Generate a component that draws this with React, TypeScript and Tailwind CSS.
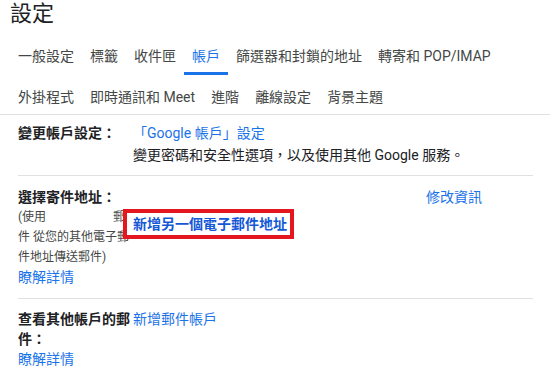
import React from 'react';

const tabsTop = ['一般設定', '標籤', '收件匣', '帳戶', '篩選器和封鎖的地址', '轉寄和 POP/IMAP'];
const tabsBottom = ['外掛程式', '即時通訊和 Meet', '進階', '離線設定', '背景主題'];

const font = { fontFamily: 'Roboto, "Noto Sans CJK TC", "Noto Sans", sans-serif' };

function Tab({ label, active }: { label: string; active?: boolean }) {
  return (
    <div
      className={
        'px-2 pt-[8px] pb-[6px] border-b-[3px] text-[14px] leading-[20px] whitespace-nowrap ' +
        (active ? 'border-[#1a73e8] text-[#1a73e8]' : 'border-transparent text-[#444746]')
      }
    >
      {label}
    </div>
  );
}

export default function App() {
  return (
    <div className="w-[550px] h-[383px] overflow-hidden bg-white text-[#202124]" style={font}>
      {/* header */}
      <div className="h-[38px] pl-[10px] text-[22px] leading-[28px]">設定</div>

      <div className="border-b border-[#e0e0e0]">
        <div className="flex pl-[10px] h-[37px]">
          {tabsTop.map((t) => (
            <Tab key={t} label={t} active={t === '帳戶'} />
          ))}
        </div>
        <div className="flex pl-[10px] h-[39px]">
          {tabsBottom.map((t) => (
            <div key={t} className="px-2 pt-[12px] text-[14px] leading-[20px] whitespace-nowrap text-[#444746]">
              {t}
            </div>
          ))}
        </div>
      </div>

      <div className="px-[18px] pr-[17px]">
        {/* 變更帳戶設定 */}
        <div className="grid grid-cols-[115px_1fr] pt-[7px] pb-[9px] border-b border-[#e0e0e0]">
          <div className="text-[14px] leading-[22px] font-bold">變更帳戶設定：</div>
          <div className="text-[14px] leading-[22px] whitespace-nowrap">
            <div className="text-[#1a73e8]">「Google 帳戶」設定</div>
            <div>變更密碼和安全性選項，以及使用其他 Google 服務。</div>
          </div>
        </div>

        {/* 選擇寄件地址 */}
        <div className="grid grid-cols-[115px_1fr_auto] pt-[11px] pb-[11px] border-b border-[#e0e0e0]">
          <div>
            <div className="text-[14px] leading-[20px] font-bold whitespace-nowrap">選擇寄件地址：</div>
            <div className="text-[12px] leading-[20px] text-[#444746] whitespace-nowrap">
              <div className="flex justify-between w-[107px]">
                <span>(使用</span>
                <span>郵</span>
              </div>
              <div>件 從您的其他電子郵</div>
              <div>件地址傳送郵件)</div>
            </div>
            <div className="text-[14px] leading-[20px] text-[#1a73e8]">瞭解詳情</div>
          </div>
          <div className="pt-[22px]">
            <span className="relative inline-block -ml-[10px] bg-white border-4 border-[#e4161f] pl-[6px] pr-[3px] text-[14px] leading-[22px] font-bold text-[#1558d6] whitespace-nowrap">
              新增另一個電子郵件地址
            </span>
          </div>
          <div className="pr-[51px] text-[14px] leading-[20px] text-[#1a73e8]">修改資訊</div>
        </div>

        {/* 查看其他帳戶的郵件 */}
        <div className="grid grid-cols-[115px_1fr] pt-[10px]">
          <div>
            <div className="text-[14px] leading-[20px] font-bold">查看其他帳戶的郵件：</div>
            <div className="text-[14px] leading-[20px] text-[#1a73e8]">瞭解詳情</div>
          </div>
          <div className="text-[14px] leading-[20px] text-[#1a73e8] whitespace-nowrap">新增郵件帳戶</div>
        </div>
      </div>
    </div>
  );
}
